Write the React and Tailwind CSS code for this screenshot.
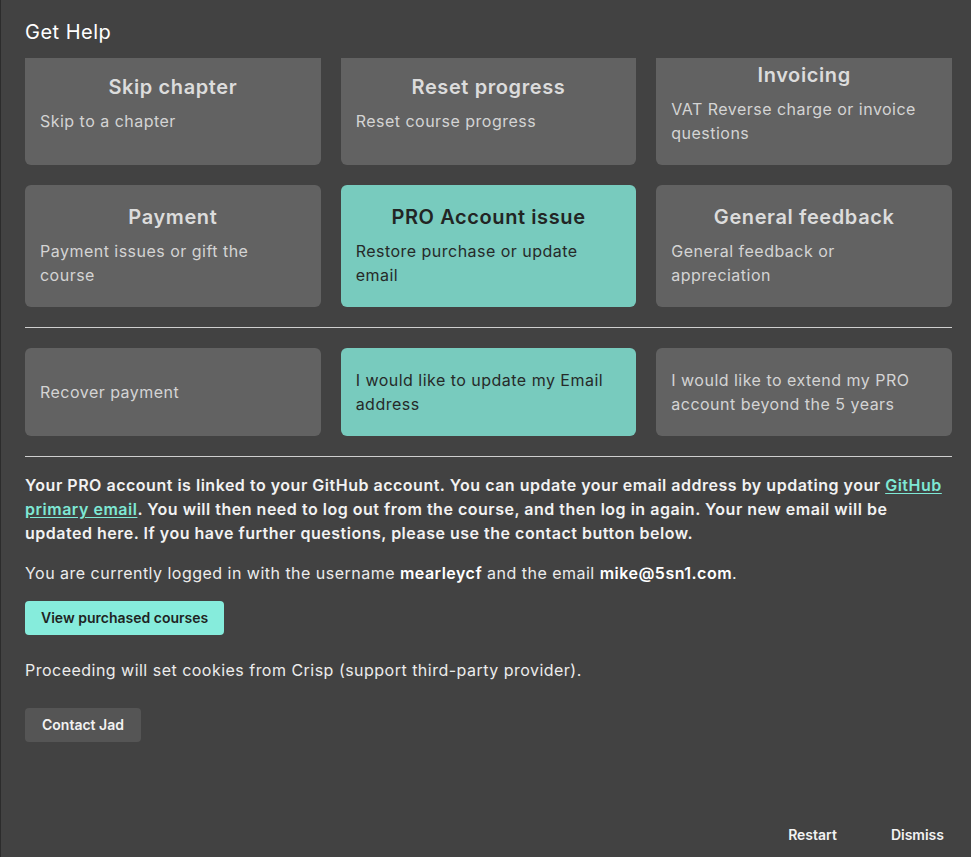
import clsx from 'clsx'

const TOPICS = [
  { title: 'Skip chapter', desc: 'Skip to a chapter' },
  { title: 'Reset progress', desc: 'Reset course progress' },
  { title: 'Invoicing', desc: 'VAT Reverse charge or invoice questions' },
  { title: 'Payment', desc: 'Payment issues or gift the course' },
  { title: 'PRO Account issue', desc: 'Restore purchase or update email', active: true },
  { title: 'General feedback', desc: 'General feedback or appreciation' },
]

const ISSUES = [
  { label: 'Recover payment' },
  { label: 'I would like to update my Email address', active: true },
  { label: 'I would like to extend my PRO account beyond the 5 years' },
]

function TopicCard({ title, desc, active }) {
  return (
    <button
      className={clsx(
        'flex flex-col justify-center rounded-md pl-[15px] pr-[35px] pt-4 pb-5 text-left h-[122px]',
        active ? 'bg-[#78cbbe] text-[#262a29]' : 'bg-[#626262] text-[#d4d4d4]',
      )}
    >
      <div className={clsx('text-center pl-5 text-xl leading-8 font-semibold tracking-[0.03em]', active ? 'text-[#222524]' : 'text-[#dcdcdc]')}>
        {title}
      </div>
      <div className="mt-1.5 text-base leading-6 tracking-[0.03em]">{desc}</div>
    </button>
  )
}

function IssueCard({ label, active }) {
  return (
    <button
      className={clsx(
        'flex items-center rounded-md pl-[15px] pr-[25px] py-5 text-left text-base leading-6 tracking-[0.03em] h-[88px]',
        active ? 'bg-[#78cbbe] text-[#262a29]' : 'bg-[#626262] text-[#d4d4d4]',
      )}
    >
      {label}
    </button>
  )
}

export default function App() {
  return (
    <div
      className="h-[857px] flex flex-col bg-[#424242] border-l border-[#2c2c2c] pl-6 pr-[19px] text-white overflow-hidden"
      style={{ fontFamily: 'Inter, "Noto Sans", sans-serif' }}
    >
      {/* ── Titre ─────────────────────────────────────────── */}
      <h2 className="pt-[18px] text-xl leading-7 font-normal text-white tracking-wide mb-3">Get Help</h2>

      {/* ── Zone défilante ────────────────────────────────── */}
      <div className="flex-1 overflow-hidden">
        <div className="-mt-[15px]">
          <div className="grid grid-cols-3 gap-5">
            {TOPICS.map((t) => (
              <TopicCard key={t.title} {...t} />
            ))}
          </div>

          <hr className="my-5 border-0 border-t border-[#cfcfcf]" />

          <div className="grid grid-cols-3 gap-5">
            {ISSUES.map((i) => (
              <IssueCard key={i.label} {...i} />
            ))}
          </div>

          <hr className="mt-5 mb-4 border-0 border-t border-[#cfcfcf]" />

          <p className="text-base leading-6 font-semibold tracking-[0.032em] text-[#f2f2f2]">
            Your PRO account is linked to your GitHub account. You can update your email address by updating your{' '}
            <a href="#" className="text-[#7ee8d5] underline underline-offset-2">GitHub primary email</a>. You will
            then need to log out from the course, and then log in again. Your new email will be updated here. If you
            have further questions, please use the contact button below.
          </p>

          <p className="mt-4 text-base leading-6 tracking-[0.03em] text-[#ececec]">
            You are currently logged in with the username <span className="font-semibold text-white">mearleycf</span> and
            the email <span className="font-semibold text-white">mike@5sn1.com</span>.
          </p>

          <button className="mt-4 rounded bg-[#86ecdc] px-4 py-[7px] text-sm leading-5 font-semibold text-[#1f2423]">
            View purchased courses
          </button>

          <p className="mt-[23px] text-base leading-6 tracking-[0.03em] text-[#ececec]">
            Proceeding will set cookies from Crisp (support third-party provider).
          </p>

          <button className="mt-[26px] rounded bg-[#555555] px-[17px] py-[7px] text-sm leading-5 font-semibold text-[#f2f2f2]">
            Contact Jad
          </button>
        </div>
      </div>

      {/* ── Pied ──────────────────────────────────────────── */}
      <div className="flex justify-end pb-1">
        <button className="px-2 py-2 text-sm leading-5 font-semibold text-[#f2f2f2]">Restart</button>
        <button className="ml-[38px] px-2 py-2 text-sm leading-5 font-semibold text-[#f2f2f2]">Dismiss</button>
      </div>
    </div>
  )
}
